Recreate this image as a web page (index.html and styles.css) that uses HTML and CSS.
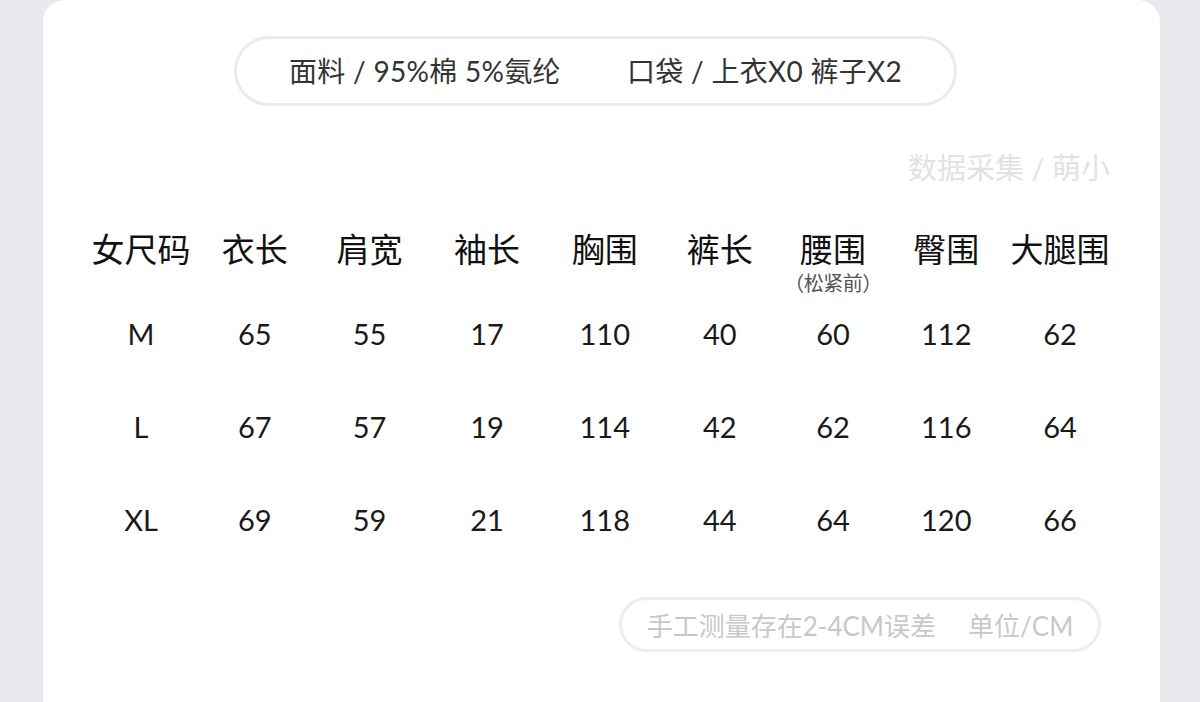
FILE: index.html
```html
<!DOCTYPE html>
<html lang="zh-CN">
<head>
    <meta charset="UTF-8">
    <meta name="viewport" content="width=device-width, initial-scale=1.0">
    <title>尺码表</title>
    <link rel="stylesheet" href="styles.css">
</head>
<body>
    <div class="card">

        <!-- Fabric / pockets -->
        <div class="info-pill">
            <span>面料 / 95%棉 5%氨纶</span>
            <span>口袋 / 上衣X0 裤子X2</span>
        </div>

        <div class="credit">数据采集 / 萌小</div>

        <div class="size-table">
            <div class="row head">
                <div class="cell">女尺码</div>
                <div class="cell">衣长</div>
                <div class="cell">肩宽</div>
                <div class="cell">袖长</div>
                <div class="cell">胸围</div>
                <div class="cell">裤长</div>
                <div class="cell">腰围<span class="note">（松紧前）</span></div>
                <div class="cell">臀围</div>
                <div class="cell">大腿围</div>
            </div>
            <div class="row">
                <div class="cell">M</div>
                <div class="cell">65</div>
                <div class="cell">55</div>
                <div class="cell">17</div>
                <div class="cell">110</div>
                <div class="cell">40</div>
                <div class="cell">60</div>
                <div class="cell">112</div>
                <div class="cell">62</div>
            </div>
            <div class="row">
                <div class="cell">L</div>
                <div class="cell">67</div>
                <div class="cell">57</div>
                <div class="cell">19</div>
                <div class="cell">114</div>
                <div class="cell">42</div>
                <div class="cell">62</div>
                <div class="cell">116</div>
                <div class="cell">64</div>
            </div>
            <div class="row">
                <div class="cell">XL</div>
                <div class="cell">69</div>
                <div class="cell">59</div>
                <div class="cell">21</div>
                <div class="cell">118</div>
                <div class="cell">44</div>
                <div class="cell">64</div>
                <div class="cell">120</div>
                <div class="cell">66</div>
            </div>
        </div>

        <!-- Measurement note -->
        <div class="foot">
            <div class="note-pill">
                <span>手工测量存在2-4CM误差</span>
                <span>单位/CM</span>
            </div>
        </div>

    </div>
</body>
</html>
```

FILE: styles.css
```css
body {
    margin: 0;
    background-color: #e9e8ed;
    font-family: Lato, "Noto Sans CJK SC", sans-serif;
    color: #1a1a1a;
}

.card {
    margin: 0 40px 0 43px;
    height: 702px;
    background-color: #fff;
    border-radius: 22px 22px 0 0;
    box-sizing: border-box;
    padding-top: 36px;
}

/* Top pill */
.info-pill {
    width: 723px;
    height: 70px;
    box-sizing: border-box;
    margin-left: 191px;
    border: 3px solid #ebebeb;
    border-radius: 35px;
    display: flex;
    align-items: center;
    justify-content: center;
    gap: 66px;
    font-size: 28px;
    letter-spacing: 0.3px;
    color: #333;
    padding-bottom: 2px;
}

.credit {
    text-align: right;
    padding-right: 50px;
    margin-top: 44px;
    font-size: 29px;
    line-height: 36px;
    color: #e2e2e2;
}

/* Size table */
.size-table {
    margin-top: 42px;
    padding-left: 41px;
}

.row {
    display: grid;
    grid-template-columns: 114px 113.5px 116px 119px 116.5px 113.5px 113px 113.5px 114px;
    height: 93px;
    align-items: start;
    font-size: 29px;
    line-height: 40px;
    color: #1a1a1a;
}

.row.head {
    height: 86px;
    font-size: 33px;
    line-height: 42px;
    color: #111;
}

.cell {
    text-align: center;
    display: flex;
    flex-direction: column;
    align-items: center;
}

.note {
    font-family: "Noto Sans CJK SC", sans-serif;
    font-size: 20px;
    line-height: 22px;
    color: #555;
    margin-top: 2px;
    letter-spacing: -0.5px;
}

/* Bottom pill */
.foot {
    display: flex;
    justify-content: flex-end;
    padding-right: 59px;
    margin-top: 4px;
}

.note-pill {
    height: 55px;
    width: 482px;
    box-sizing: border-box;
    border: 3px solid #ededed;
    border-radius: 28px;
    display: flex;
    align-items: center;
    justify-content: center;
    gap: 32px;
    font-size: 26px;
    color: #c8c8c8;
}
```
